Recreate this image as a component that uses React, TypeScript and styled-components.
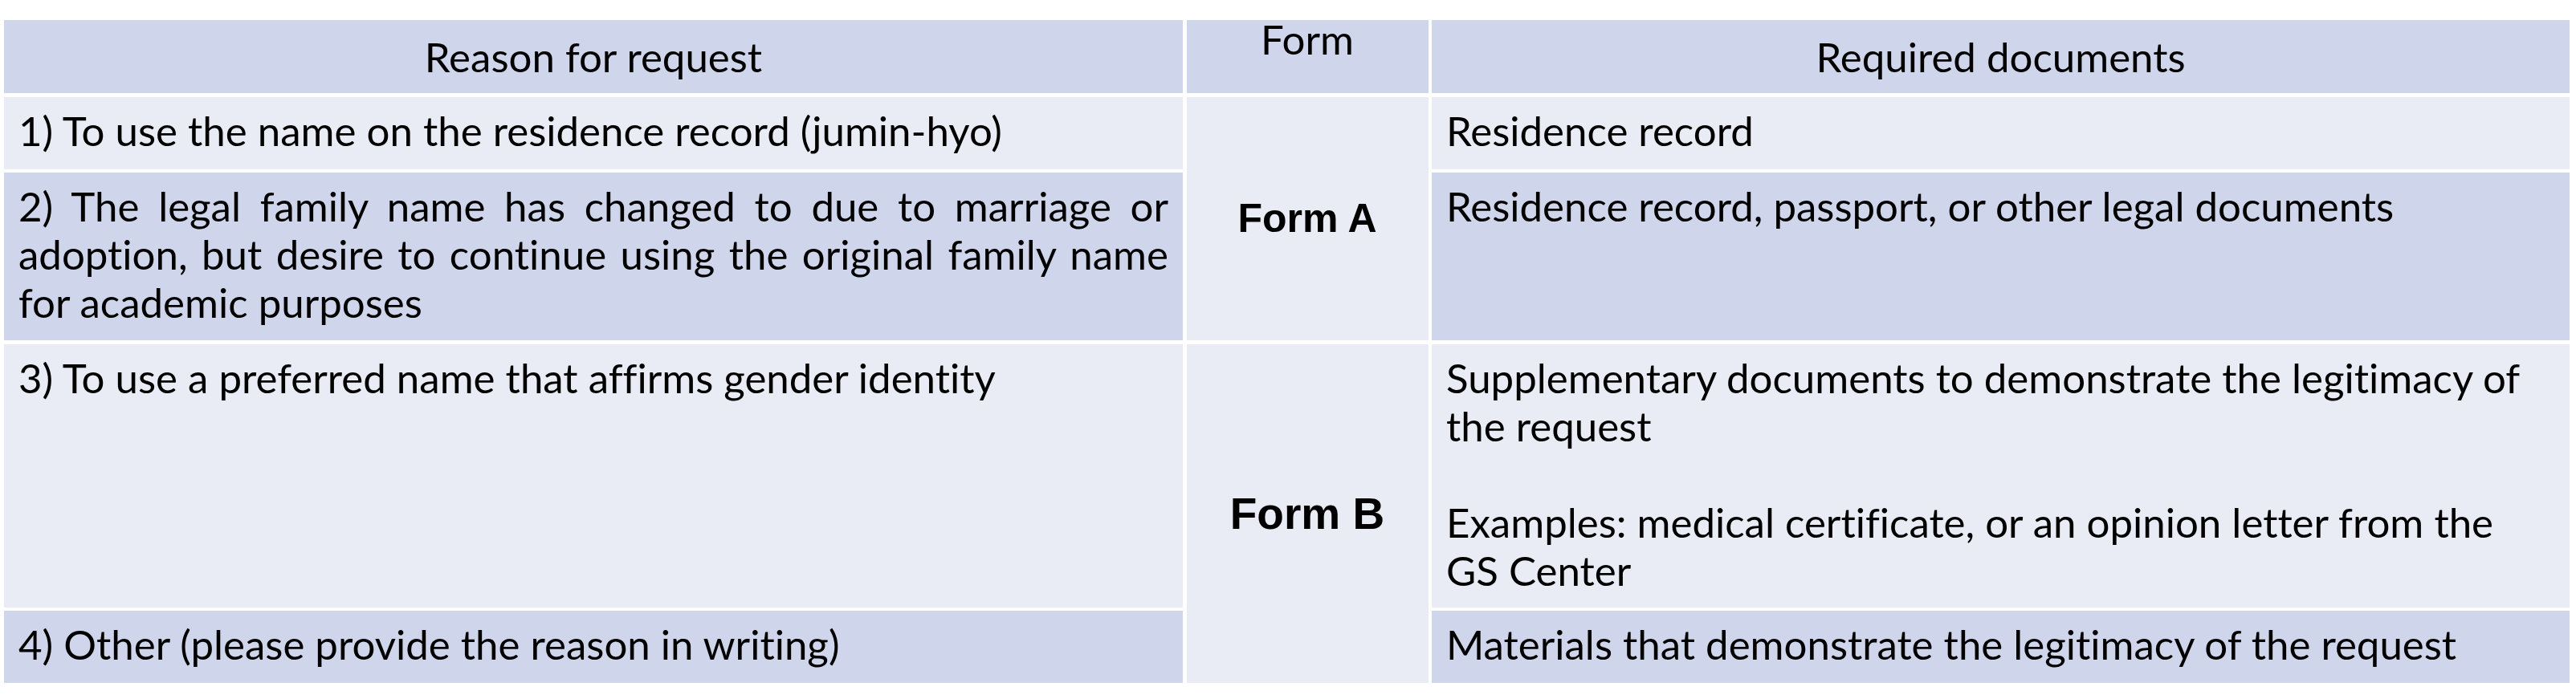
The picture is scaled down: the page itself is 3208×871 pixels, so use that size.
import React from 'react';
import styled, { createGlobalStyle } from 'styled-components';

const GlobalStyle = createGlobalStyle`
  html, body {
    margin: 0;
    padding: 0;
    background: #ffffff;
  }
  body {
    font-family: Lato, 'Open Sans', 'Liberation Sans', sans-serif;
    font-variant-ligatures: none;
    color: #000000;
  }
`;

const Page = styled.div`
  padding: 25px 0 0 5px;
  width: 3203px;
  height: 846px;
  background: #ffffff;
`;

//表の枠。列幅と行の高さはスライドの表のまま。
const Table = styled.div`
  display: grid;
  grid-template-columns: 1468px 301px 1417px;
  grid-template-rows: 91px 90px 209px 328px 90px;
  column-gap: 4.5px;
  row-gap: 4.5px;
  width: 3195px;
`;

const HeadCell = styled.div<{ $top?: boolean }>`
  display: flex;
  justify-content: center;
  align-items: ${(p) => (p.$top ? 'flex-start' : 'center')};
  background: #cfd5ea;
  font-size: 51px;
  line-height: ${(p) => (p.$top ? '48px' : '56px')};
  white-space: nowrap;
`;

const BodyCell = styled.div<{ $dark?: boolean }>`
  background: ${(p) => (p.$dark ? '#cfd5ea' : '#e9ebf5')};
  padding: 12px 18px 0 18px;
  font-size: 51px;
  line-height: 60px;
  box-sizing: border-box;
  overflow: hidden;
`;

const FormCell = styled.div<{ $size: number }>`
  grid-row: span 2;
  display: flex;
  align-items: center;
  justify-content: center;
  background: #e9ebf5;
  font-family: 'Liberation Sans', Arial, sans-serif;
  font-weight: bold;
  font-size: ${(p) => p.$size}px;
  white-space: nowrap;
`;

const Line = styled.span`
  display: block;
  white-space: nowrap;
  min-height: 60px;
`;

//両端揃えの行（最後の行以外）
const JustLine = styled.span`
  display: block;
  text-align: justify;
  text-align-last: justify;
`;

export default function App() {
  return (
    <>
      <GlobalStyle />
      <Page>
        <Table>
          <HeadCell>Reason for request</HeadCell>
          <HeadCell $top>Form</HeadCell>
          <HeadCell>Required documents</HeadCell>

          <BodyCell>
            <Line>1) To use the name on the residence record (jumin-hyo)</Line>
          </BodyCell>
          <FormCell $size={50}>Form A</FormCell>
          <BodyCell>
            <Line>Residence record</Line>
          </BodyCell>

          <BodyCell $dark>
            <JustLine>2) The legal family name has changed to due to marriage or</JustLine>
            <JustLine>adoption, but desire to continue using the original family name</JustLine>
            <Line>for academic purposes</Line>
          </BodyCell>
          <BodyCell $dark>
            <Line>Residence record, passport, or other legal documents</Line>
          </BodyCell>

          <BodyCell>
            <Line>3) To use a preferred name that affirms gender identity</Line>
          </BodyCell>
          <FormCell $size={55}>Form B</FormCell>
          <BodyCell>
            <Line>Supplementary documents to demonstrate the legitimacy of</Line>
            <Line>the request</Line>
            <Line />
            <Line>Examples: medical certificate, or an opinion letter from the</Line>
            <Line>GS Center</Line>
          </BodyCell>

          <BodyCell $dark>
            <Line>4) Other (please provide the reason in writing)</Line>
          </BodyCell>
          <BodyCell $dark>
            <Line>Materials that demonstrate the legitimacy of the request</Line>
          </BodyCell>
        </Table>
      </Page>
    </>
  );
}
